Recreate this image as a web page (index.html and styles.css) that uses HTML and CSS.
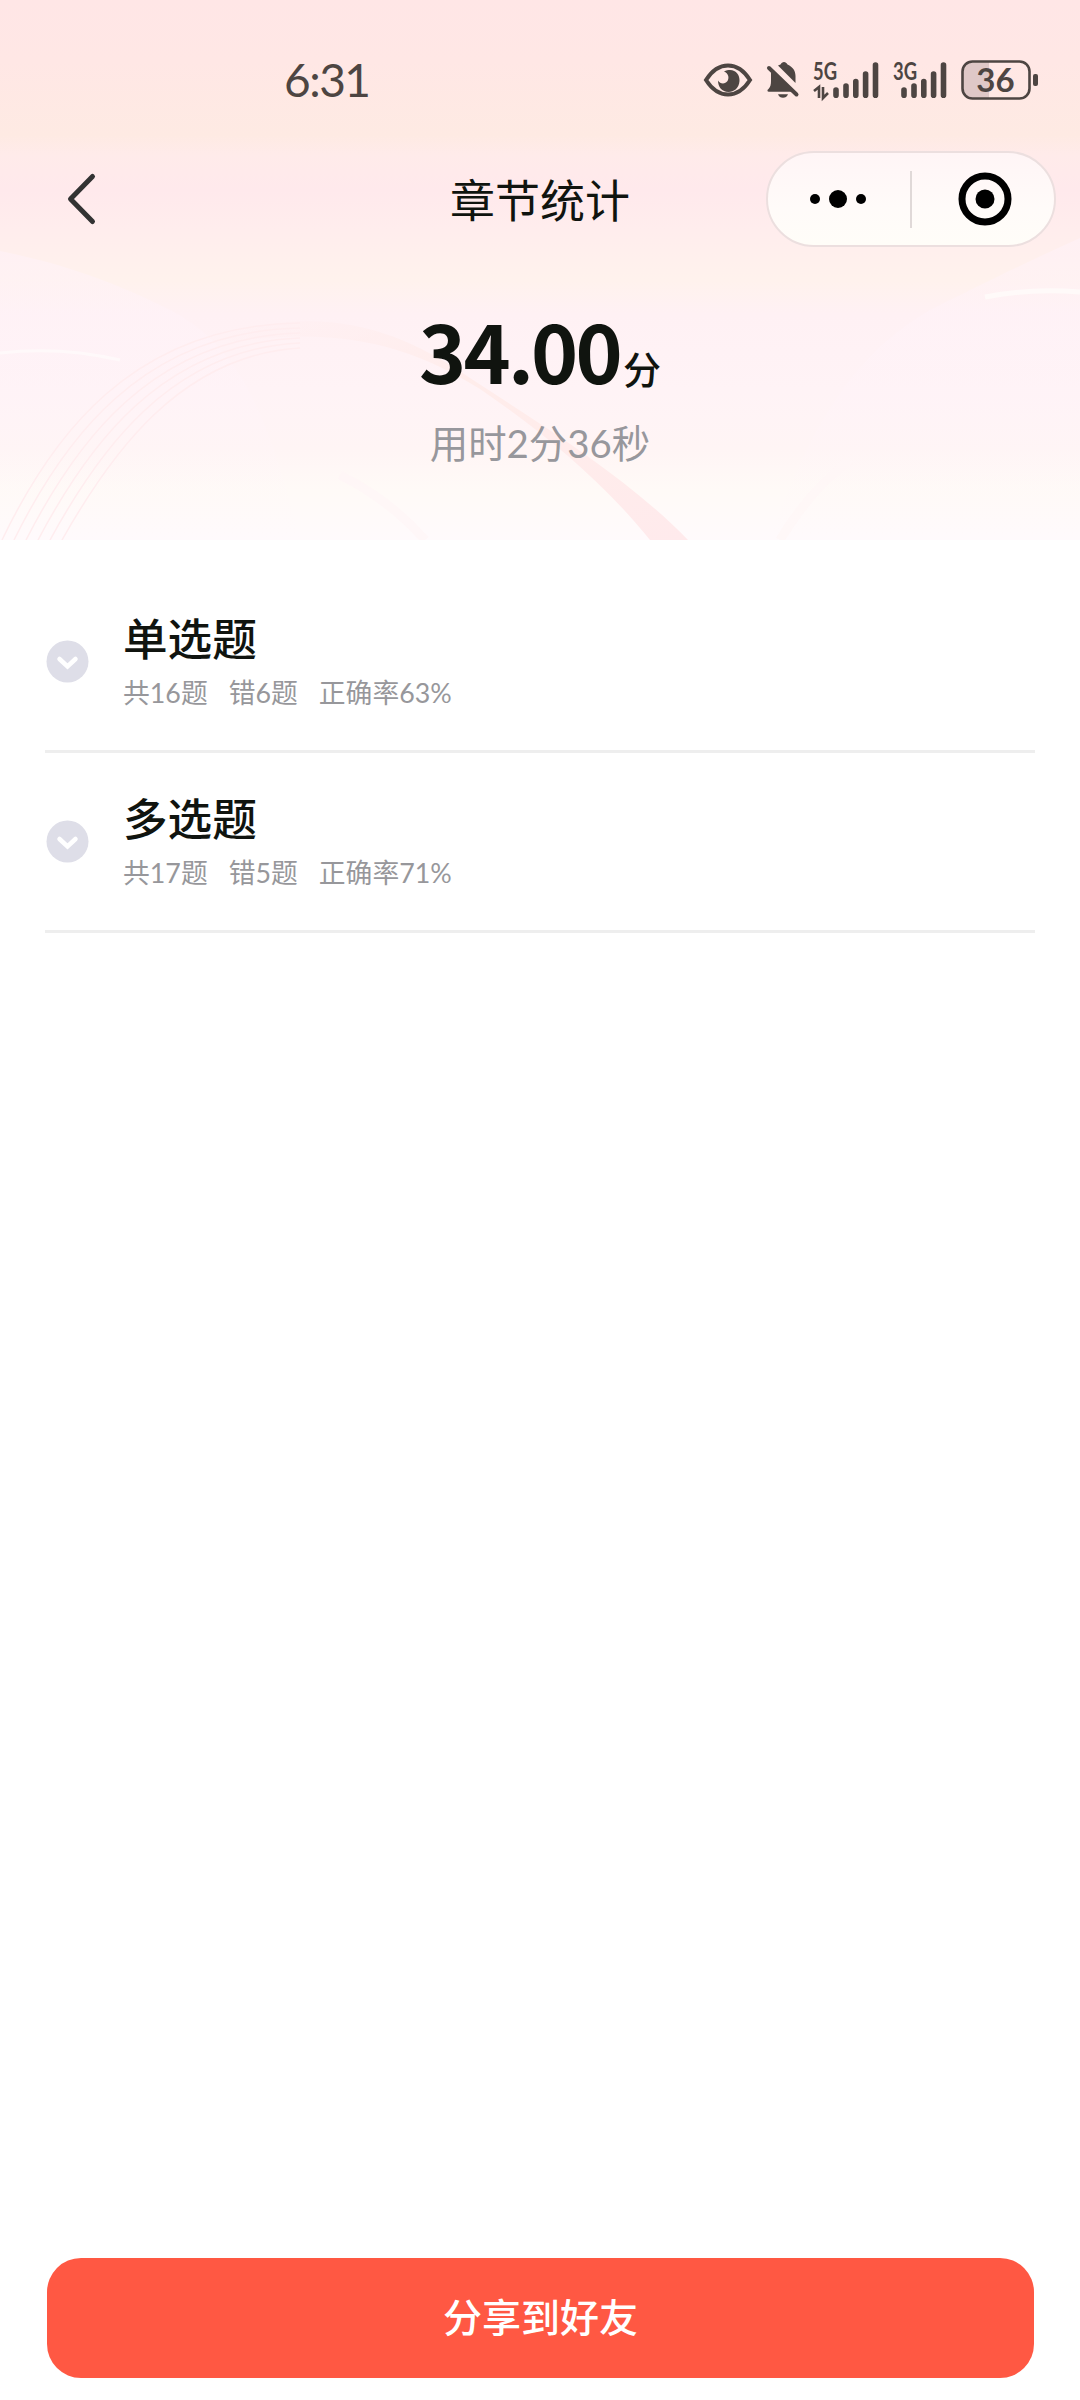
FILE: index.html
```html
<!DOCTYPE html>
<html lang="zh-CN">
<head>
    <meta charset="UTF-8">
    <meta name="viewport" content="width=device-width, initial-scale=1.0">
    <title>章节统计</title>
    <link rel="stylesheet" href="styles.css">
</head>
<body>
    <div class="page">
        <header class="header">
            <svg class="waves" viewBox="0 0 1080 540" preserveAspectRatio="none">
                <defs>
                    <linearGradient id="ribbon" x1="0" y1="0" x2="1" y2="1">
                        <stop offset="0" stop-color="#ffeae8" stop-opacity="0"/>
                        <stop offset="0.4" stop-color="#ffebe8" stop-opacity="0.8"/>
                        <stop offset="1" stop-color="#ffeaec"/>
                    </linearGradient>
                    <linearGradient id="hill" x1="0" y1="0" x2="0" y2="1">
                        <stop offset="0" stop-color="#fff2fa" stop-opacity="0.5"/>
                        <stop offset="1" stop-color="#fff6fa" stop-opacity="0"/>
                    </linearGradient>
                </defs>
                <path d="M0 251C70 265 120 285 170 310C240 345 270 420 300 540H0Z" fill="url(#hill)"/>
                <path d="M1080 238C1020 265 980 285 930 310C860 350 810 420 770 540H1080Z" fill="url(#hill)"/>
                <path d="M230 332C330 306 400 330 470 378C550 430 630 480 688 540H650C600 478 540 430 480 389C410 345 340 326 230 342Z" fill="url(#ribbon)"/>
                <g fill="none" stroke="#ffedef" stroke-width="1.500">
                    <path d="M2 540C50 440 130 325 300 323"/>
                    <path d="M14 540C62 443 140 331 300 328"/>
                    <path d="M26 540C74 446 150 337 300 333"/>
                    <path d="M38 540C86 449 160 343 300 338"/>
                    <path d="M50 540C98 452 170 349 300 343"/>
                    <path d="M62 540C110 455 180 355 300 348"/>
                </g>
                <path d="M985 297Q1030 288 1080 292" fill="none" stroke="#fffaf9" stroke-width="5"/>
                <path d="M0 353Q60 346 120 360" fill="none" stroke="#fff9fa" stroke-width="3"/>
                <path d="M340 475Q390 500 425 540" fill="none" stroke="#fff5f6" stroke-width="9" stroke-opacity="0.7"/>
                <path d="M850 460Q810 490 780 540" fill="none" stroke="#fff6f6" stroke-width="9" stroke-opacity="0.7"/>
            </svg>

            <div class="status-bar">
                <span class="time">6:31</span>
                <div class="status-icons">
                    <svg class="eye" width="50" height="40" viewBox="0 0 50 40">
                        <path d="M3 20C10 9 18 5.500 25 5.500S40 9 47 20C40 31 32 34.500 25 34.500S10 31 3 20Z" fill="none" stroke="#4d4542" stroke-width="4"/>
                        <path d="M21 11.500C31 7 37 14 36.500 21C36 28 31 32 25.500 32C19 32 15 27 15 20.500C17 24 22 24.500 24.500 21C26.500 17.500 25.500 13.500 21 11.500Z" fill="#4d4542"/>
                    </svg>
                    <svg class="bell" width="34" height="40" viewBox="0 0 34 40">
                        <path d="M12 5.500L14.500 4.500C16 1 20 1 21.500 4.500C27 7 29.500 11 29.500 16V23ZM5 10L27 31.800H3C1 31.800 1 29.800 2.500 29C4.500 27 5 24 5 21ZM12 34.300H22C20.500 39 13.500 39 12 34.300Z" fill="#4d4542"/>
                        <path d="M3 8L30.500 34.500" stroke="#4d4542" stroke-width="4" stroke-linecap="round"/>
                    </svg>
                    <svg class="signal" width="68" height="40" viewBox="0 0 68 40">
                        <text x="0" y="20" textLength="24" lengthAdjust="spacingAndGlyphs">5G</text>
                        <path d="M1 31L6 27V38M10 27V38L15 33" fill="none" stroke="#4d4542" stroke-width="2.600"/>
                        <g stroke="#4d4542" stroke-width="5.600" stroke-linecap="round">
                            <path d="M23 30V35.200M33 26V35.200M42.800 21.500V35.200M52.600 14V35.200M62.500 5V35.200"/>
                        </g>
                    </svg>
                    <svg class="signal second" width="56" height="40" viewBox="0 0 56 40">
                        <text x="0" y="20" textLength="24" lengthAdjust="spacingAndGlyphs">3G</text>
                        <g stroke="#4d4542" stroke-width="5.600" stroke-linecap="round">
                            <path d="M11 30V35.200M21 26V35.200M30.800 21.500V35.200M40.600 14V35.200M50.500 5V35.200"/>
                        </g>
                    </svg>
                    <svg class="battery" width="78" height="40" viewBox="0 0 78 40">
                        <path d="M28 2H11Q2 2 2 11V29Q2 38 11 38H28Z" fill="#dfc8c7"/>
                        <rect x="1.500" y="1.500" width="67" height="37" rx="10" fill="none" stroke="#4d4542" stroke-width="2.600"/>
                        <rect x="72" y="14" width="5" height="12" rx="2" fill="#4d4542"/>
                        <text x="34.500" y="32" text-anchor="middle">36</text>
                    </svg>
                </div>
            </div>

            <nav class="nav">
                <svg class="back" width="40" height="60" viewBox="0 0 40 60">
                    <path d="M32.500 7.500L10.500 30L32.500 52.500" fill="none" stroke="#333" stroke-width="5" stroke-linecap="round" stroke-linejoin="round"/>
                </svg>
                <h1>章节统计</h1>
                <div class="capsule">
                    <svg width="60" height="20" viewBox="0 0 60 20">
                        <circle cx="7" cy="10" r="5"/>
                        <circle cx="30" cy="10" r="9"/>
                        <circle cx="53" cy="10" r="5"/>
                    </svg>
                    <span class="line"></span>
                    <svg width="54" height="54" viewBox="0 0 54 54">
                        <circle cx="27" cy="27" r="23" fill="none" stroke="#000" stroke-width="7"/>
                        <circle cx="27" cy="27" r="9.500"/>
                    </svg>
                </div>
            </nav>

            <div class="score"><span class="num">34.00</span><span class="unit">分</span></div>
            <div class="used">用时2分36秒</div>
        </header>

        <main class="list">
            <div class="item">
                <svg class="arrow" width="43" height="43" viewBox="0 0 43 43">
                    <circle cx="21.500" cy="21.500" r="21" fill="#dedee8"/>
                    <path d="M13.500 19L21.500 26.500L29.500 19" fill="none" stroke="#fff" stroke-width="4.500" stroke-linecap="round"/>
                </svg>
                <div>
                    <h2>单选题</h2>
                    <p><span>共16题</span><span>错6题</span><span>正确率63%</span></p>
                </div>
            </div>
            <div class="item">
                <svg class="arrow" width="43" height="43" viewBox="0 0 43 43">
                    <circle cx="21.500" cy="21.500" r="21" fill="#dedee8"/>
                    <path d="M13.500 19L21.500 26.500L29.500 19" fill="none" stroke="#fff" stroke-width="4.500" stroke-linecap="round"/>
                </svg>
                <div>
                    <h2>多选题</h2>
                    <p><span>共17题</span><span>错5题</span><span>正确率71%</span></p>
                </div>
            </div>
        </main>

        <button type="button" class="share">分享到好友</button>
    </div>
</body>
</html>
```
FILE: styles.css
```css
* {
    box-sizing: border-box;
}
body {
    margin: 0;
    background-color: #fff;
    font-family: Lato, "Noto Sans CJK SC", sans-serif;
    color: #10140f;
}
h1, h2, p {
    margin: 0;
}
svg {
    display: block;
    flex-shrink: 0;
    overflow: visible;
}
.page {
    display: flex;
    flex-direction: column;
    width: 1080px;
    height: 2400px;
}
.header {
    position: relative;
    height: 540px;
    background: linear-gradient(#ffe6e6 0, #ffe7e5 60px, #feeae3 135px, #ffebea 155px, #ffe9ec 190px, #ffeded 230px, #fff2ed 280px, #fff1f4 315px, #fff3f6 390px, #fff5f5 450px, #fffaf7 490px, #fffafc 540px);
}
.waves {
    position: absolute;
    left: 0;
    top: 0;
    width: 1080px;
    height: 540px;
    overflow: hidden;
}
.status-bar, .nav, .score, .used {
    position: relative;
}
.status-bar {
    display: flex;
    align-items: center;
    justify-content: space-between;
    height: 139px;
    padding: 20px 41px 0 284px;
}
.time {
    font-size: 46px;
    line-height: 50px;
    letter-spacing: -1.5px;
    color: #4d4542;
}
.status-icons {
    display: flex;
    align-items: center;
}
.status-icons text {
    fill: #4d4542;
    font-weight: bold;
}
.bell {
    margin-left: 13px;
}
.signal {
    margin-left: 13px;
}
.signal.second {
    margin-left: 12px;
}
.signal text {
    font-size: 24px;
}
.battery {
    margin-left: 12px;
}
.battery text {
    font-size: 33px;
}
.nav {
    display: grid;
    grid-template-columns: 290px 1fr 290px;
    align-items: center;
    height: 120px;
    padding: 0 24px;
}
.back {
    margin-left: 36px;
}
.nav h1 {
    padding-top: 3px;
    font-size: 45px;
    font-weight: 400;
    line-height: 60px;
    text-align: center;
}
.capsule {
    display: flex;
    align-items: center;
    width: 290px;
    height: 96px;
    padding-left: 40px;
    border: 2px solid #ecdfdf;
    border-radius: 48px;
    background: linear-gradient(#fff5f6, #fffbf9 60%, #fffdf8);
}
.capsule .line {
    width: 2px;
    height: 57px;
    margin: 0 46px 0 42px;
    background-color: #e0d9d8;
}
.score {
    display: flex;
    align-items: baseline;
    justify-content: center;
    height: 130px;
    margin-top: 25px;
    line-height: 130px;
}
.score .num {
    font-family: "Noto Sans CJK SC", sans-serif;
    font-size: 80px;
    font-weight: bold;
    letter-spacing: -2.8px;
}
.score .unit {
    margin-left: 3px;
    font-size: 38px;
    font-weight: 500;
}
.used {
    height: 60px;
    margin-top: -1px;
    font-size: 38.4px;
    line-height: 60px;
    text-align: center;
    color: #97979c;
}
.list {
    flex: 1;
    padding: 33px 45px 0;
}
.item {
    display: flex;
    gap: 34px;
    height: 180px;
    border-bottom: 3px solid #eee;
}
.arrow {
    margin: 67px 0 0 1px;
}
.item h2 {
    margin-top: 36px;
    font-size: 44.6px;
    font-weight: 500;
    line-height: 60px;
}
.item p {
    display: flex;
    gap: 21px;
    margin-top: 4px;
    font-size: 26.8px;
    line-height: 40px;
    color: #97979b;
}
.share {
    height: 120px;
    margin: 0 46px 22px 47px;
    padding: 0 0 6px;
    border: none;
    border-radius: 34px;
    background-color: #ff5843;
    color: #fff;
    font-family: inherit;
    font-size: 39px;
    font-weight: 500;
}
```
